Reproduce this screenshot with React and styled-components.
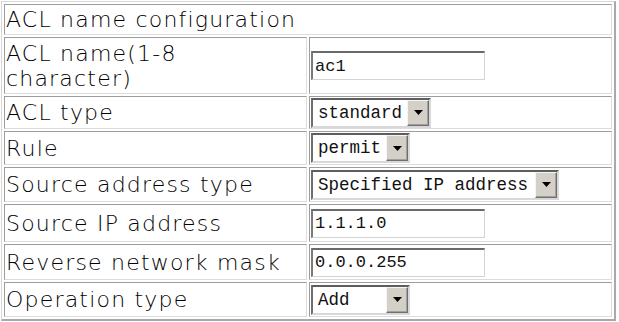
import React from "react";
import styled, { createGlobalStyle } from "styled-components";

const Global = createGlobalStyle`
  html, body { margin: 0; padding: 0; background: #ffffff; }
  body { width: 619px; height: 322px; overflow: hidden; }
`;

const Table = styled.table`
  margin: 1px 0 0 1px;
  width: 615px;
  border-spacing: 2px;
  border-style: solid;
  border-width: 1px 2px 2px 1px;
  border-color: #d6d6d6 #a9a9a9 #a9a9a9 #d6d6d6;
  table-layout: fixed;
`;

const Cell = styled.td`
  box-sizing: border-box;
  height: ${(p) => p.$h}px;
  padding: 0 1px;
  border-style: solid;
  border-width: 1px;
  border-color: #9c9c9c #dcdcdc #dcdcdc #9c9c9c;
  vertical-align: middle;
  white-space: ${(p) => (p.$wrap ? "normal" : "nowrap")};
`;

const LabelCell = styled(Cell)`
  width: 303px;
  font-family: "DejaVu Sans", Verdana, sans-serif;
  font-size: 22px;
  font-weight: 300;
  letter-spacing: 1.2px;
  line-height: 25px;
  color: #000;
  padding-left: 1px;
`;

const ValueCell = styled(Cell)`
  font-family: "Liberation Mono", monospace;
`;

const TextInput = styled.input`
  box-sizing: border-box;
  display: block;
  width: 174px;
  height: 29px;
  margin: 0;
  padding: 0 0 0 2px;
  border-style: solid;
  border-width: 2px 1px 1px 2px;
  border-color: #6a6a6a #d4d4d4 #d4d4d4 #7a7a7a;
  background: #fff;
  font-family: "Liberation Mono", monospace;
  font-size: 17px;
  color: #111;
  outline: none;
`;

const Select = styled.div`
  box-sizing: border-box;
  display: flex;
  align-items: stretch;
  width: ${(p) => p.$w}px;
  height: 30px;
  border-style: solid;
  border-width: 2px;
  border-color: #5e5e5e #d8d8d8 #d8d8d8 #6e6e6e;
  background: #fff;
`;

const SelectValue = styled.span`
  flex: 1;
  display: flex;
  align-items: center;
  padding-left: 5px;
  font-family: "Liberation Mono", monospace;
  font-size: 17.5px;
  color: #111;
  white-space: nowrap;
  overflow: hidden;
`;

const ArrowButton = styled.span`
  box-sizing: border-box;
  width: 22px;
  display: flex;
  align-items: center;
  justify-content: center;
  background: #d4d0c8;
  border-style: solid;
  border-width: 1px;
  border-color: #f4f4f4 #6f6f6f #6f6f6f #f4f4f4;
  box-shadow: inset -1px -1px 0 #a0a0a0;
`;

const Arrow = () => (
  <svg width="9" height="5" viewBox="0 0 9 5">
    <path d="M0 0H9L4.5 5Z" fill="#000" />
  </svg>
);

const Dropdown = ({ w, value }) => (
  <Select $w={w}>
    <SelectValue>{value}</SelectValue>
    <ArrowButton>
      <Arrow />
    </ArrowButton>
  </Select>
);

const rows = [
  { label: "ACL name(1-8 character)", h: 57, wrap: true, input: "ac1" },
  { label: "ACL type", h: 33, select: "standard", w: 120 },
  { label: "Rule", h: 34, select: "permit", w: 99 },
  { label: "Source address type", h: 35, select: "Specified IP address", w: 248 },
  { label: "Source IP address", h: 38, input: "1.1.1.0" },
  { label: "Reverse network mask", h: 36, input: "0.0.0.255" },
  { label: "Operation type", h: 35, select: "Add", w: 99 },
];

export default function App() {
  return (
    <>
      <Global />
      <Table>
        <tbody>
          <tr>
            <LabelCell as="td" colSpan={2} $h={31}>
              ACL name configuration
            </LabelCell>
          </tr>
          {rows.map((r) => (
            <tr key={r.label}>
              <LabelCell $h={r.h} $wrap={r.wrap}>
                {r.wrap ? (
                  <>
                    ACL name(1-8
                    <br />
                    character)
                  </>
                ) : (
                  r.label
                )}
              </LabelCell>
              <ValueCell $h={r.h}>
                {r.input !== undefined ? (
                  <TextInput defaultValue={r.input} readOnly />
                ) : (
                  <Dropdown w={r.w} value={r.select} />
                )}
              </ValueCell>
            </tr>
          ))}
        </tbody>
      </Table>
    </>
  );
}
